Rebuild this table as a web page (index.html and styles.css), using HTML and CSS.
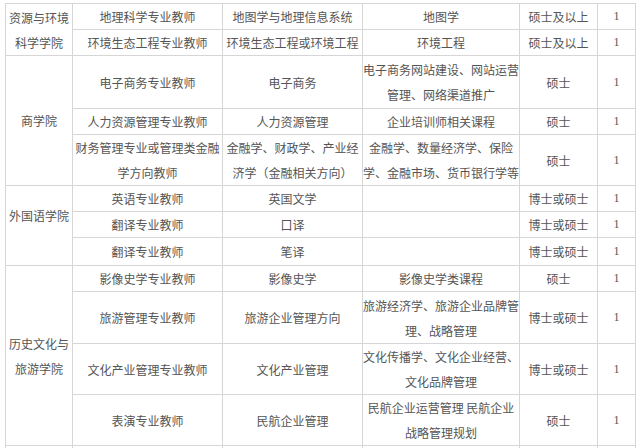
FILE: index.html
```html
<!DOCTYPE html>
<html lang="zh">
<head>
<meta charset="utf-8">
<link rel="stylesheet" href="styles.css">
</head>
<body>
<table class="jobs">
<colgroup>
<col class="c1"><col class="c2"><col class="c3"><col class="c4"><col class="c5"><col class="c6">
</colgroup>
<tbody>
<tr class="h26"><td rowspan="2">资源与环境<br>科学学院</td><td>地理科学专业教师</td><td>地图学与地理信息系统</td><td>地图学</td><td>硕士及以上</td><td class="num">1</td></tr>
<tr class="h25"><td>环境生态工程专业教师</td><td>环境生态工程或环境工程</td><td>环境工程</td><td>硕士及以上</td><td class="num">1</td></tr>
<tr class="h53"><td rowspan="3">商学院</td><td>电子商务专业教师</td><td>电子商务</td><td>电子商务网站建设、网站运营<br>管理、网络渠道推广</td><td>硕士</td><td class="num">1</td></tr>
<tr class="h26"><td>人力资源管理专业教师</td><td>人力资源管理</td><td>企业培训师相关课程</td><td>硕士</td><td class="num">1</td></tr>
<tr class="h51"><td>财务管理专业或管理类金融<br>学方向教师</td><td>金融学、财政学、产业经<br>济学（金融相关方向）</td><td>金融学、数量经济学、保险<br>学、金融市场、货币银行学等</td><td>硕士</td><td class="num">1</td></tr>
<tr class="h25"><td rowspan="3" class="up">外国语学院</td><td>英语专业教师</td><td>英国文学</td><td></td><td>博士或硕士</td><td class="num">1</td></tr>
<tr class="h26"><td>翻译专业教师</td><td>口译</td><td></td><td>博士或硕士</td><td class="num">1</td></tr>
<tr class="h28"><td>翻译专业教师</td><td>笔译</td><td></td><td>博士或硕士</td><td class="num">1</td></tr>
<tr class="h26"><td rowspan="4">历史文化与<br>旅游学院</td><td>影像史学专业教师</td><td>影像史学</td><td>影像史学类课程</td><td>硕士</td><td class="num">1</td></tr>
<tr class="h52"><td>旅游管理专业教师</td><td>旅游企业管理方向</td><td>旅游经济学、旅游企业品牌管<br>理、战略管理</td><td>博士或硕士</td><td class="num">1</td></tr>
<tr class="h51"><td>文化产业管理专业教师</td><td>文化产业管理</td><td>文化传播学、文化企业经营、<br>文化品牌管理</td><td>博士或硕士</td><td class="num">1</td></tr>
<tr class="h51"><td>表演专业教师</td><td>民航企业管理</td><td>民航企业运营管理 民航企业<br>战略管理规划</td><td>硕士</td><td class="num">1</td></tr>
<tr class="h30"><td></td><td></td><td></td><td></td><td></td><td></td></tr>
</tbody>
</table>
</body>
</html>
```

FILE: styles.css
```css
html, body {
  margin: 0;
  padding: 0;
  background: #fff;
  overflow: hidden;
}
body {
  padding: 3px 0 0 5px;
  font-family: "Noto Sans CJK SC", "Noto Sans", sans-serif;
  font-size: 12px;
  color: #555;
}
.jobs {
  border-collapse: collapse;
  table-layout: fixed;
  width: 630px;
}
.c1 { width: 67px; }
.c2 { width: 150px; }
.c3 { width: 140px; }
.c4 { width: 157px; }
.c5 { width: 78px; }
.c6 { width: 38px; }
.jobs td {
  border: 1px solid #d6d6d6;
  padding: 0;
  text-align: center;
  vertical-align: middle;
  line-height: 25px;
  white-space: nowrap;
  overflow: hidden;
}
.jobs td.num {
  font-family: "Liberation Serif", serif;
  font-size: 12px;
}
.jobs td.up {
  padding-bottom: 20px;
}
.h25 { height: 25px; }
.h26 { height: 26px; }
.h28 { height: 28px; }
.h30 { height: 30px; }
.h51 { height: 51px; }
.h52 { height: 52px; }
.h53 { height: 53px; }
```
